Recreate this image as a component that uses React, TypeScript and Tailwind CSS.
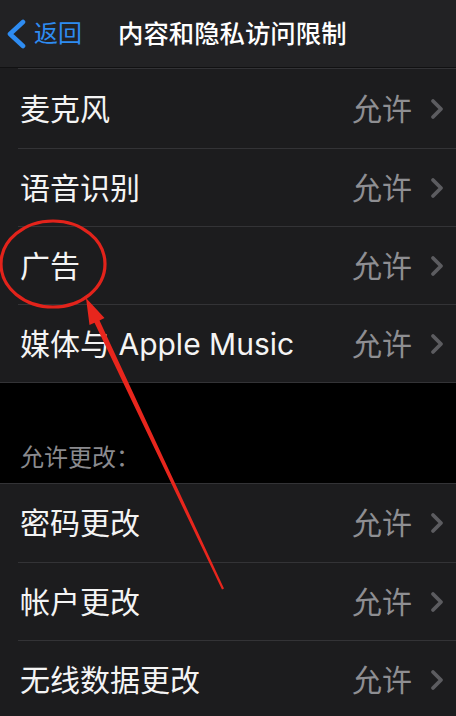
const FONT = { fontFamily: '"Inter", "Noto Sans CJK SC", sans-serif' };

const MEDIA_ROWS = ["麦克风", "语音识别", "广告", "媒体与 Apple Music"];
const CHANGE_ROWS = ["密码更改", "帐户更改", "无线数据更改"];

function Chevron() {
    return (
        <svg width="14" height="22" viewBox="0 0 14 22" className="ml-[18px] mr-[12px]">
            <path d="M3 3 L11 11 L3 19" fill="none" stroke="#5c5c60" strokeWidth="3.8" strokeLinecap="round" strokeLinejoin="round" />
        </svg>
    );
}

function BackArrow() {
    return (
        <svg width="22" height="30" viewBox="0 0 22 30">
            <path d="M18 3 L5 15 L18 27" fill="none" stroke="currentColor" strokeWidth="4.6" strokeLinecap="round" strokeLinejoin="round" />
        </svg>
    );
}

function Row({ label, first, tall }: { label: string; first?: boolean; tall?: boolean }) {
    return (
        <div className="pl-[18px]">
            <div
                className={`flex items-center ${tall ? "h-[80px]" : "h-[78px]"} ${first ? "" : "border-t border-[#333336]"}`}
            >
                <span className="flex-1 pl-[2px] text-[30px] leading-none text-[#f4f4f4]">{label}</span>
                <span className="text-[30px] leading-none text-[#8e8e92]">允许</span>
                <Chevron />
            </div>
        </div>
    );
}

export default function App() {
    return (
        <div className="relative w-[456px] h-[716px] overflow-hidden bg-black" style={FONT}>
            {/* navigation bar */}
            <header className="flex items-center h-[68px] bg-[#222224] border-b border-[#111112]">
                <div className="flex items-center pl-[5px] text-[#2e8cf2]">
                    <BackArrow />
                    <span className="ml-[7px] text-[24px] leading-none">返回</span>
                </div>
                <h1 className="ml-[36px] text-[25.4px] leading-none font-medium text-white">内容和隐私访问限制</h1>
            </header>

            <section className="bg-[#1c1c1e] border-b border-[#333336]">
                {MEDIA_ROWS.map((label, i) => (
                    <Row key={label} label={label} tall={i === 0} />
                ))}
            </section>

            <div className="flex items-end h-[100px] pl-[20px] pb-[12px]">
                <span className="text-[24px] leading-[26px] text-[#8a8a8e]">允许更改：</span>
            </div>

            <section className="bg-[#1c1c1e] border-t border-[#333336]">
                {CHANGE_ROWS.map((label, i) => (
                    <Row key={label} label={label} first={i === 0} />
                ))}
            </section>

            {/* red markup drawn over the list */}
            <svg className="absolute inset-0 pointer-events-none" width="456" height="716" viewBox="0 0 456 716">
                <ellipse cx="53" cy="264" rx="52" ry="43" fill="none" stroke="#e2231b" strokeWidth="3.2" />
                <polygon
                    points="86,298 104.5,318 99.5,320.5 224,588.6 222,589.4 94.5,322.8 89.5,325"
                    fill="#e8261d"
                />
            </svg>
        </div>
    );
}
